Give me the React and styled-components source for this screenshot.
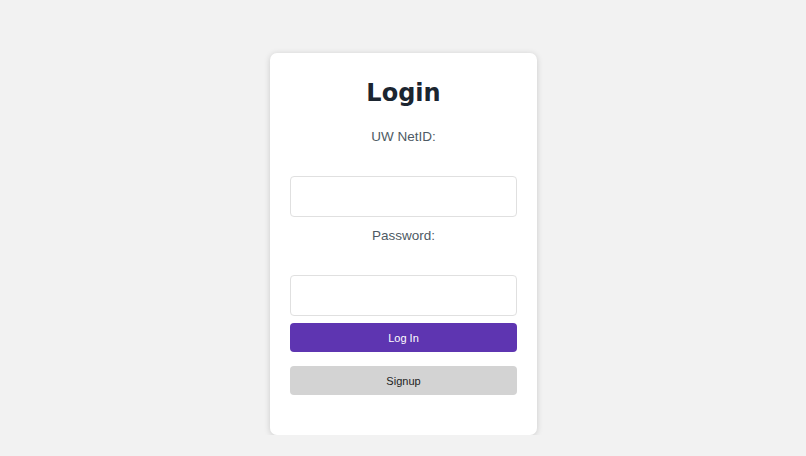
import React from "react";
import styled, { createGlobalStyle } from "styled-components";

const GlobalStyle = createGlobalStyle`
    body {
        margin: 0;
        background: #f2f2f2;
        font-family: "Liberation Sans", Arial, sans-serif;
    }
`;

const Page = styled.div`
    display: flex;
    justify-content: center;
    align-items: flex-start;
    padding: 53px 0 0 1px;
`;

const Card = styled.div`
    width: 267px;
    box-sizing: border-box;
    padding: 20px 20px 40px;
    background: #ffffff;
    border-radius: 7px;
    box-shadow: 0 1px 6px rgba(0, 0, 0, 0.16);
    display: flex;
    flex-direction: column;
`;

const Title = styled.h1`
    margin: 6px 0 22px;
    font-family: "DejaVu Sans", Verdana, sans-serif;
    font-weight: 700;
    font-size: 24px;
    line-height: 28px;
    color: #1b2530;
    text-align: center;
`;

const Label = styled.label`
    display: block;
    margin: ${({ first }) => (first ? "0" : "11px")} 0 31px;
    font-size: 13.5px;
    line-height: 16px;
    color: #4e5a64;
    text-align: center;
`;

const Input = styled.input`
    display: block;
    width: 100%;
    height: 41px;
    box-sizing: border-box;
    border: 1px solid #e0e0e0;
    border-radius: 4px;
    padding: 0 10px;
    font-size: 14px;
    outline: none;
`;

const Button = styled.button`
    display: block;
    width: 100%;
    height: 29px;
    margin-top: ${({ gap }) => gap}px;
    border: none;
    border-radius: 4px;
    background: ${({ primary }) => (primary ? "#5e35b1" : "#d3d3d3")};
    color: ${({ primary }) => (primary ? "#ffffff" : "#1e1e1e")};
    font-family: "Liberation Sans", Arial, sans-serif;
    font-size: 11px;
    cursor: pointer;
`;

export default function App() {
    return (
        <>
            <GlobalStyle />
            <Page>
                <Card>
                    <Title>Login</Title>
                    <Label first>UW NetID:</Label>
                    <Input type="text" />
                    <Label>Password:</Label>
                    <Input type="password" />
                    <Button primary gap={7}>Log In</Button>
                    <Button gap={14}>Signup</Button>
                </Card>
            </Page>
        </>
    );
}
